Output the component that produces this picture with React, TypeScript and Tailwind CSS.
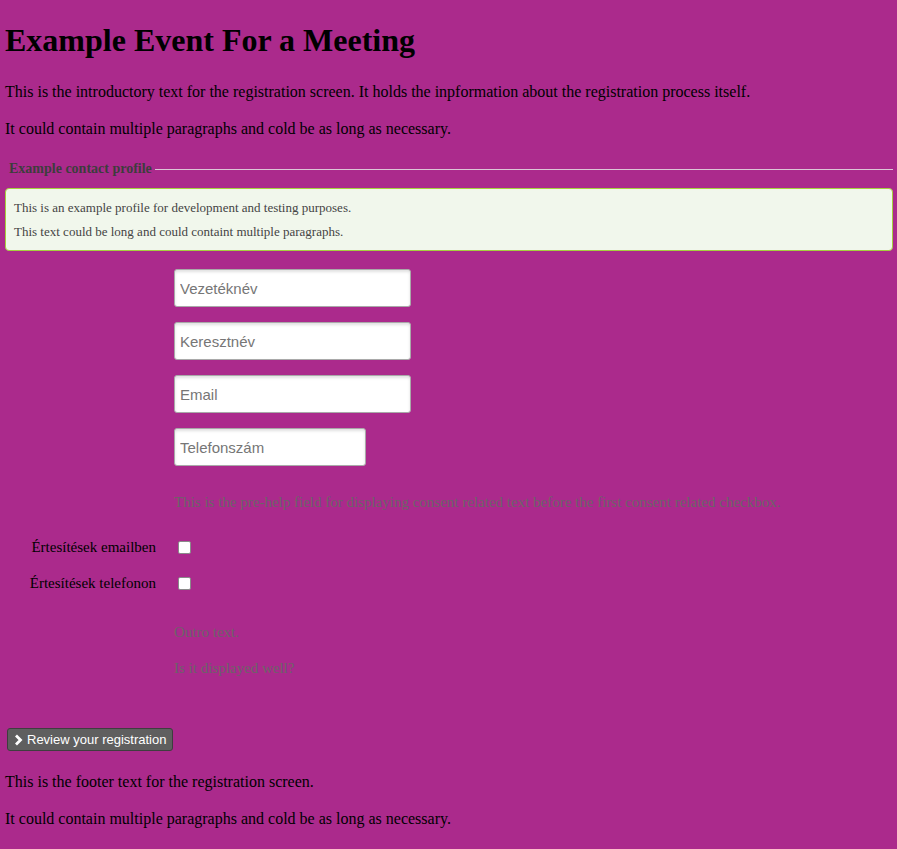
import React from "react";

export default function App() {
  const serif = { fontFamily: '"Liberation Serif", "Times New Roman", serif' };
  return (
    <div className="min-h-[849px] w-full bg-[#ab2a8c] text-black" style={serif}>
      <div className="pl-[5px] pr-[4px] pt-[22px] pb-[20px]">
        <h1 className="text-[32px] font-bold leading-[37px] mb-[22px]">Example Event For a Meeting</h1>
        <p className="text-[16px] leading-[21px] mb-[16px]">
          This is the introductory text for the registration screen. It holds the inpformation about the registration process itself.
        </p>
        <p className="text-[16px] leading-[21px]">It could contain multiple paragraphs and cold be as long as necessary.</p>

        <div className="mt-[22px] flex items-center pl-[4px]">
          <span className="text-[14px] font-bold leading-[16px] text-[#3d3d3d]">Example contact profile</span>
          <div className="ml-[3px] h-px flex-1 bg-[#dcc6d6]" />
        </div>

        <div className="mt-[11px] rounded-[4px] border border-[#a6cf3e] bg-[#f1f7ec] px-[8px] pt-[11px] pb-[10px] text-[13px] leading-[16px] text-[#444]">
          <p className="mb-[8px]">This is an example profile for development and testing purposes.</p>
          <p>This text could be long and could containt multiple paragraphs.</p>
        </div>

        <div className="mt-[18px] flex flex-col gap-[15px] pl-[169px]" style={{ fontFamily: '"Liberation Sans", Arial, sans-serif' }}>
          {[
            ["Vezetéknév", "w-[237px]"],
            ["Keresztnév", "w-[237px]"],
            ["Email", "w-[237px]"],
            ["Telefonszám", "w-[192px]"],
          ].map(([ph, w]) => (
            <input
              key={ph}
              placeholder={ph}
              className={`${w} h-[38px] rounded-[3px] border border-[#a9a9a9] bg-white px-[5px] text-[15px] text-[#555] placeholder:text-[#767676] shadow-[inset_0_2px_3px_rgba(0,0,0,0.12)] outline-none`}
            />
          ))}
        </div>

        <p className="mt-[26px] pl-[169px] text-[15px] leading-[20px] text-[#6b6368]">
          This is the pre-help field for displaying consent related text before the first consent related checkbox.
        </p>

        <div className="mt-[17px]">
          {["Értesítések emailben", "Értesítések telefonon"].map((l) => (
            <div key={l} className="flex h-[36px] items-center">
              <label className="w-[151px] text-right text-[15px] leading-[20px]">{l}</label>
              <div className="pl-[22px]">
                <span className="block h-[13px] w-[13px] rounded-[2px] border border-[#8a8a8a] bg-white" />
              </div>
            </div>
          ))}
        </div>

        <p className="mt-[21px] pl-[169px] text-[15px] leading-[20px] text-[#6b6368]">Outro text.</p>
        <p className="mt-[16px] pl-[169px] text-[15px] leading-[20px] text-[#6b6368]">Is it displayed well?</p>

        <div className="mt-[50px] pl-[2px]">
          <button
            className="flex h-[23px] items-center gap-[4px] rounded-[3px] border border-[#3e3e3e] bg-[#5f5f5f] pl-[6px] pr-[6px] text-[13px] text-white"
            style={{ fontFamily: '"Liberation Sans", Arial, sans-serif' }}
          >
            <svg width="9" height="12" viewBox="0 0 9 12">
              <path d="M2 1.5 L6.5 6 L2 10.5" stroke="white" strokeWidth="2.8" fill="none" />
            </svg>
            Review your registration
          </button>
        </div>

        <p className="mt-[20px] text-[16px] leading-[21px] mb-[16px]">This is the footer text for the registration screen.</p>
        <p className="text-[16px] leading-[21px]">It could contain multiple paragraphs and cold be as long as necessary.</p>
      </div>
    </div>
  );
}
